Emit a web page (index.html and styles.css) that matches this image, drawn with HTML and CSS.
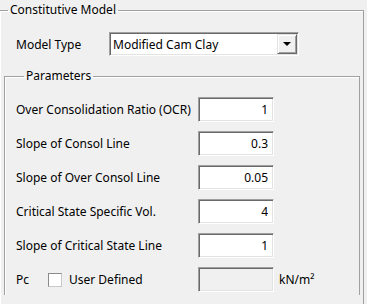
FILE: index.html
```html
<!DOCTYPE html>
<html lang="en">
<head>
    <meta charset="UTF-8">
    <meta name="viewport" content="width=device-width, initial-scale=1.0">
    <title>Constitutive Model</title>
    <link rel="stylesheet" href="styles.css">
</head>
<body>
    <fieldset class="group outer">
        <legend>Constitutive Model</legend>
        <div class="model-row">
            <span class="model-label">Model Type</span>
            <div class="combo">
                <span class="combo-text">Modified Cam Clay</span>
                <span class="combo-btn"><span class="arrow"></span></span>
            </div>
        </div>

        <fieldset class="group params">
            <legend>Parameters</legend>
            <div class="row">
                <span class="label">Over Consolidation Ratio (OCR)</span>
                <input type="text" class="num" value="1" readonly>
            </div>
            <div class="row">
                <span class="label">Slope of Consol Line</span>
                <input type="text" class="num" value="0.3" readonly>
            </div>
            <div class="row">
                <span class="label">Slope of Over Consol Line</span>
                <input type="text" class="num" value="0.05" readonly>
            </div>
            <div class="row">
                <span class="label">Critical State Specific Vol.</span>
                <input type="text" class="num" value="4" readonly>
            </div>
            <div class="row">
                <span class="label">Slope of Critical State Line</span>
                <input type="text" class="num" value="1" readonly>
            </div>
            <div class="row">
                <span class="label pc-label">
                    <span class="pc">Pc</span>
                    <span class="check"></span>
                    <span>User Defined</span>
                </span>
                <input type="text" class="num" value="" disabled>
                <span class="unit">kN/m²</span>
            </div>
        </fieldset>
    </fieldset>
</body>
</html>
```

FILE: styles.css
```css
body{
    margin: 0;
    background-color: #f0f0f0;
    font-family: "Noto Sans", "Open Sans", sans-serif;
    font-size: 12px;
    color: #000;
    overflow: hidden;
}
.group{
    border: 1px solid #a0a0a0;
    border-bottom: none;
    box-shadow: inset 1px 1px 0 #fff;
    padding: 0;
    min-width: 0;
}
.group legend{
    padding: 0 2px;
    line-height: 16px;
    margin-left: 8px;
}
.outer{
    margin: 2px 0 0 -1px;
    width: 365px;
    height: 302px;
    box-sizing: border-box;
}
.model-row{
    display: flex;
    align-items: center;
    padding: 14px 0 0 16px;
}
.model-label{
    width: 93px;
}
.combo{
    width: 190px;
    height: 24px;
    box-sizing: border-box;
    display: flex;
    align-items: center;
    background-color: #fff;
    border: 1px solid;
    border-color: #a0a0a0 #fff #fff #a0a0a0;
    box-shadow: inset 1px 1px 0 #696969, inset -1px -1px 0 #e3e3e3;
}
.combo-text{
    flex: 1;
    padding-left: 3px;
}
.combo-btn{
    width: 20px;
    height: 20px;
    margin-right: 1px;
    box-sizing: border-box;
    display: flex;
    align-items: center;
    justify-content: center;
    background-color: #f0f0f0;
    border: 1px solid;
    border-color: #e3e3e3 #696969 #696969 #e3e3e3;
    box-shadow: inset 1px 1px 0 #fff, inset -1px -1px 0 #a0a0a0;
}
.arrow{
    width: 0;
    height: 0;
    border-left: 4px solid transparent;
    border-right: 4px solid transparent;
    border-top: 4px solid #000;
}
.params{
    margin: 12px 0 0 4px;
    width: 356px;
    box-sizing: border-box;
    padding: 13px 0 0 11px;
}
.params legend{
    margin-left: 8px;
}
.row{
    display: flex;
    align-items: center;
    height: 25px;
    margin-bottom: 9px;
}
.row:last-child{
    margin-bottom: 3px;
}
.label{
    width: 182px;
    flex: none;
}
.pc-label{
    display: flex;
    align-items: center;
}
.pc{
    width: 32px;
}
.check{
    width: 14px;
    height: 14px;
    box-sizing: border-box;
    margin-right: 7px;
    background-color: #fff;
    border: 1px solid;
    border-color: #8a8a8a #c8c8c8 #c8c8c8 #8a8a8a;
}
.num{
    width: 76px;
    height: 25px;
    box-sizing: border-box;
    margin: 0;
    padding: 0 5px 0 2px;
    font-family: inherit;
    font-size: 12px;
    color: #000;
    text-align: right;
    background-color: #fff;
    border: 1px solid;
    border-color: #a0a0a0 #fff #fff #a0a0a0;
    box-shadow: inset 1px 1px 0 #696969, inset -1px -1px 0 #e3e3e3;
    outline: none;
}
.num:disabled{
    background-color: #f0f0f0;
}
.unit{
    margin-left: 5px;
}
```
